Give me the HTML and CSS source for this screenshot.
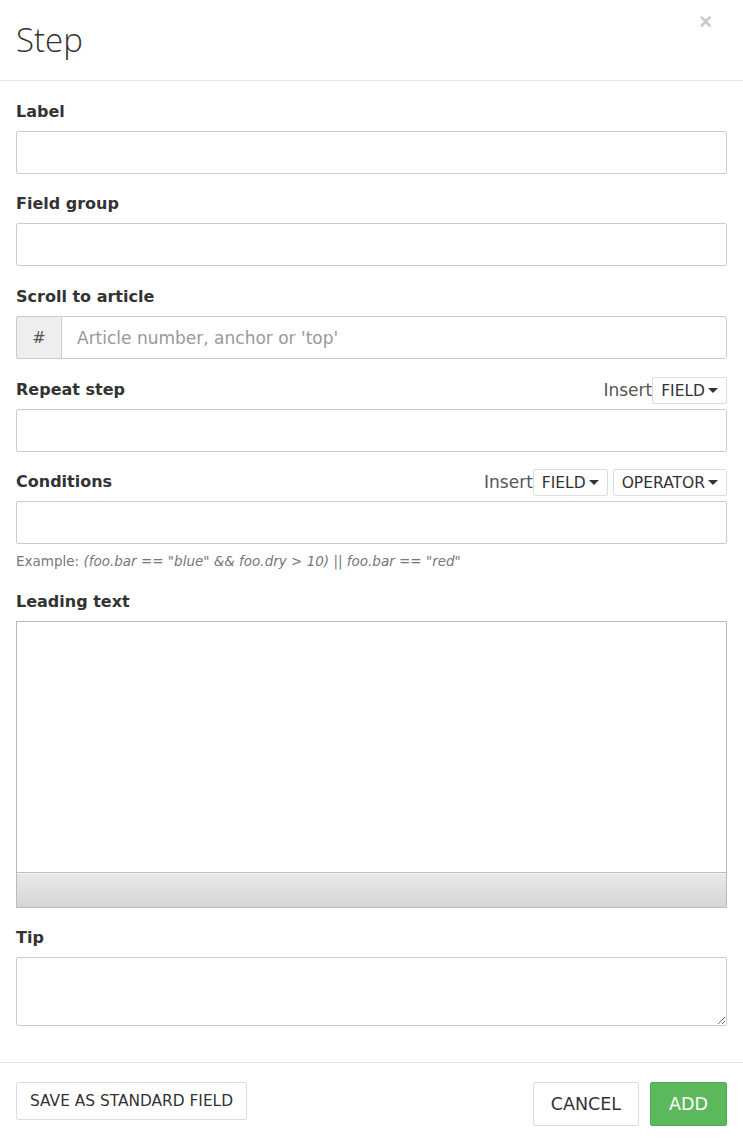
FILE: index.html
```html
<!DOCTYPE html>
<html>
<head>
<meta charset="utf-8">
<link rel="stylesheet" href="styles.css">
</head>
<body>
<div class="modal">
  <div class="modal-header">
    <h1 class="title">Step</h1>
    <span class="close">&times;</span>
  </div>
  <div class="modal-body">
    <div class="group">
      <div class="label-row"><label>Label</label></div>
      <input class="input" type="text">
    </div>
    <div class="group">
      <div class="label-row"><label>Field group</label></div>
      <input class="input" type="text">
    </div>
    <div class="group shift">
      <div class="label-row"><label>Scroll to article</label></div>
      <div class="input-group">
        <span class="addon">#</span>
        <input class="input grouped" type="text" placeholder="Article number, anchor or 'top'">
      </div>
    </div>
    <div class="group shift">
      <div class="label-row">
        <label>Repeat step</label>
        <div class="inserts"><span class="insert">Insert</span><button class="dd">FIELD<span class="caret"></span></button></div>
      </div>
      <input class="input" type="text">
    </div>
    <div class="group">
      <div class="label-row">
        <label>Conditions</label>
        <div class="inserts"><span class="insert">Insert</span><button class="dd">FIELD<span class="caret"></span></button><button class="dd op">OPERATOR<span class="caret"></span></button></div>
      </div>
      <input class="input" type="text">
      <p class="help">Example: <em>(foo.bar == "blue" &amp;&amp; foo.dry &gt; 10) || foo.bar == "red"</em></p>
    </div>
    <div class="group">
      <div class="label-row"><label>Leading text</label></div>
      <div class="editor">
        <div class="editor-area"></div>
        <div class="editor-bar"></div>
      </div>
    </div>
    <div class="group last">
      <div class="label-row"><label>Tip</label></div>
      <textarea class="textarea"></textarea>
    </div>
  </div>
  <div class="modal-footer">
    <button class="btn small">SAVE AS STANDARD FIELD</button>
    <div class="right">
      <button class="btn">CANCEL</button>
      <button class="btn success">ADD</button>
    </div>
  </div>
</div>
</body>
</html>
```
FILE: styles.css
```css
* { box-sizing: border-box; }
html, body { margin: 0; padding: 0; background: #fff; }
body { font-family: "DejaVu Sans", sans-serif; color: #333; }
.modal { width: 743px; min-height: 1141px; background: #fff; }
.modal-header { height: 81px; border-bottom: 1px solid #e5e5e5; display: flex; justify-content: space-between; align-items: flex-start; padding: 0 16px; }
.title { margin: 20px 0 0 0; font-family: "Open Sans", sans-serif; font-weight: 300; font-size: 33px; line-height: 40px; color: #333; }
.close { margin-top: 9px; margin-right: 15px; font-size: 22px; font-weight: bold; color: #c8c8c8; font-family: "Liberation Sans", sans-serif; }
.modal-body { padding: 16px 16px 0 16px; }
.group { margin-bottom: 15px; }
.group.shift { padding-top: 1px; }
.group.last { margin-bottom: 36px; }
.label-row { display: flex; justify-content: space-between; align-items: flex-end; height: 31px; margin-bottom: 3px; }
label { font-weight: bold; font-size: 16px; line-height: 24px; color: #333; display: block; padding-bottom: 4px; }
.input { display: block; width: 100%; height: 43px; border: 1px solid #ccc; border-radius: 2px; font-family: inherit; font-size: 17px; padding: 6px 15px; }
.input-group { display: flex; height: 43px; }
.addon { width: 45px; background: #eee; border: 1px solid #ccc; border-right: none; border-radius: 3px 0 0 3px; display: flex; align-items: center; justify-content: center; font-size: 16px; color: #555; }
.input.grouped { flex: 1; border-radius: 0 3px 3px 0; height: 43px; }
.input::placeholder { color: #999; }
.inserts { display: flex; align-items: flex-end; gap: 5px; }
.insert { font-size: 17px; color: #555; margin-right: -5px; line-height: 26px; padding-bottom: 3px; }
.dd { height: 27px; background: #fff; border: 1px solid #ddd; border-radius: 2px; font-family: inherit; font-size: 15.5px; color: #333; padding: 0 8px; display: flex; align-items: center; margin-bottom: 2px; }
.caret { display: inline-block; width: 0; height: 0; border-left: 5px solid transparent; border-right: 5px solid transparent; border-top: 5px solid #333; margin-left: 3px; }
.help { margin: 7px 0 0 0; padding-bottom: 1px; font-size: 13.5px; line-height: 20px; color: #777; }
.help em { color: #777; }
.editor { border: 1px solid #bbb; height: 287px; display: flex; flex-direction: column; }
.editor-area { flex: 1; background: #fff; }
.editor-bar { height: 35px; border-top: 1px solid #bbb; background: linear-gradient(#e9e9e9, #d5d5d5); box-shadow: inset 0 1px 0 #f6f6f6; }
.textarea { display: block; width: 100%; height: 69px; border: 1px solid #ccc; border-radius: 2px; resize: vertical; font-family: inherit; }
.modal-footer { border-top: 1px solid #e5e5e5; padding: 19px 16px 16px 16px; display: flex; justify-content: space-between; align-items: flex-start; }
.right { display: flex; gap: 11px; }
.btn { height: 44px; background: #fff; border: 1px solid #ddd; border-radius: 2px; font-family: inherit; font-size: 17.5px; color: #333; padding: 0 17px; }
.btn.small { height: 38px; font-size: 15.4px; padding: 0 13px; }
.btn.success { background: #5cb85c; border-color: #4cae4c; color: #fff; padding: 0 18px; }
```
